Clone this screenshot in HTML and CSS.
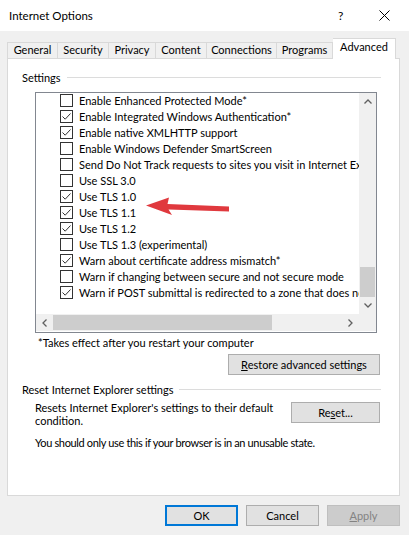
FILE: index.html
```html
<!DOCTYPE html>
<html lang="en">
<head>
    <meta charset="UTF-8">
    <meta name="viewport" content="width=device-width, initial-scale=1.0">
    <link rel="stylesheet" href="styles.css">
</head>
<body>
    <div class="window">
        <div class="titlebar">
            <span class="title">Internet Options</span>
            <span class="help">?</span>
            <svg class="close" width="11" height="11" viewBox="0 0 11 11"><path d="M0.5 0.5 L10.5 10.5 M10.5 0.5 L0.5 10.5" stroke="#000" stroke-width="1"/></svg>
        </div>

        <div class="tabs">
            <div class="tab t-general">General</div>
            <div class="tab t-security">Security</div>
            <div class="tab t-privacy">Privacy</div>
            <div class="tab t-content">Content</div>
            <div class="tab t-connections">Connections</div>
            <div class="tab t-programs">Programs</div>
            <div class="tab t-advanced active">Advanced</div>
        </div>

        <div class="panel">
            <div class="group-title"><span>Settings</span><div class="rule"></div></div>

            <div class="listbox">
                <div class="list-main">
                    <div class="items">
                        <div class="row"><span class="check"></span><span>Enable Enhanced Protected Mode*</span></div>
                        <div class="row"><span class="check on"></span><span>Enable Integrated Windows Authentication*</span></div>
                        <div class="row"><span class="check on"></span><span>Enable native XMLHTTP support</span></div>
                        <div class="row"><span class="check"></span><span>Enable Windows Defender SmartScreen</span></div>
                        <div class="row"><span class="check"></span><span>Send Do Not Track requests to sites you visit in Internet Explorer</span></div>
                        <div class="row"><span class="check"></span><span>Use SSL 3.0</span></div>
                        <div class="row"><span class="check on"></span><span>Use TLS 1.0</span></div>
                        <div class="row"><span class="check on"></span><span>Use TLS 1.1</span></div>
                        <div class="row"><span class="check on"></span><span>Use TLS 1.2</span></div>
                        <div class="row"><span class="check"></span><span>Use TLS 1.3 (experimental)</span></div>
                        <div class="row"><span class="check on"></span><span>Warn about certificate address mismatch*</span></div>
                        <div class="row"><span class="check"></span><span>Warn if changing between secure and not secure mode</span></div>
                        <div class="row"><span class="check on"></span><span>Warn if POST submittal is redirected to a zone that does not permit posts</span></div>
                    </div>
                    <div class="vscroll">
                        <div class="sb-btn">
                            <svg width="8" height="5" viewBox="0 0 8 5"><path d="M0.5 4.5 L4 1 L7.5 4.5" fill="none" stroke="#606060" stroke-width="1.3"/></svg>
                        </div>
                        <div class="vtrack"><div class="vthumb"></div></div>
                        <div class="sb-btn">
                            <svg width="8" height="5" viewBox="0 0 8 5"><path d="M0.5 0.5 L4 4 L7.5 0.5" fill="none" stroke="#606060" stroke-width="1.3"/></svg>
                        </div>
                    </div>
                </div>
                <div class="hscroll">
                    <div class="sb-btn">
                        <svg width="5" height="8" viewBox="0 0 5 8"><path d="M4.5 0.5 L1 4 L4.5 7.5" fill="none" stroke="#606060" stroke-width="1.3"/></svg>
                    </div>
                    <div class="htrack"><div class="hthumb"></div></div>
                    <div class="sb-btn">
                        <svg width="5" height="8" viewBox="0 0 5 8"><path d="M0.5 0.5 L4 4 L0.5 7.5" fill="none" stroke="#606060" stroke-width="1.3"/></svg>
                    </div>
                    <div class="corner"></div>
                </div>
            </div>

            <div class="note">*Takes effect after you restart your computer</div>
            <div class="restore-row">
                <button class="btn restore"><u>R</u>estore advanced settings</button>
            </div>

            <div class="group-title reset-title"><span>Reset Internet Explorer settings</span><div class="rule"></div></div>
            <div class="reset-row">
                <p class="reset-text">Resets Internet Explorer's settings to their default condition.</p>
                <button class="btn reset">Re<u>s</u>et...</button>
            </div>
            <p class="warn">You should only use this if your browser is in an unusable state.</p>
        </div>

        <div class="footer">
            <button class="btn default">OK</button>
            <button class="btn">Cancel</button>
            <button class="btn disabled"><u>A</u>pply</button>
        </div>

        <!-- red arrow pointing at TLS 1.0 -->
        <svg class="arrow" width="409" height="535" viewBox="0 0 409 535">
            <polygon points="146,205.5 169,197.5 167.5,204 229,206.5 229,211.5 168.5,209.5 172,215" fill="#e0393e"/>
        </svg>
    </div>
</body>
</html>
```

FILE: styles.css
```css
/* Global */
* {
    margin: 0;
    padding: 0;
    box-sizing: border-box;
}
body {
    font-family: "Lato", "Liberation Sans", sans-serif;
    font-size: 11px;
    color: #000;
    background-color: #f0f0f0;
}
.window {
    position: relative;
    width: 409px;
    height: 535px;
    background-color: #f0f0f0;
    overflow: hidden;
}

/* Title bar */
.titlebar {
    height: 31px;
    background-color: #fff;
    display: flex;
    align-items: center;
    padding-left: 9px;
}
.title {
    flex-grow: 1;
    font-size: 11.5px;
}
.help {
    width: 12px;
    margin-right: 29px;
    font-size: 12px;
}
.close {
    margin-right: 19px;
}

/* Tabs */
.tabs {
    display: flex;
    align-items: flex-end;
    padding: 7px 0 0 7px;
    position: relative;
    z-index: 1;
}
.tab {
    height: 16px;
    line-height: 14px;
    text-align: center;
    border: 1px solid #d9d9d9;
    border-bottom: none;
    border-left: none;
    background-color: #f0f0f0;
}
.tab:first-child {
    border-left: 1px solid #d9d9d9;
}
.t-general { width: 51px; }
.t-security { width: 51px; }
.t-privacy { width: 47px; }
.t-content { width: 51px; }
.t-connections { width: 70px; }
.t-programs { width: 56px; }
.tab.active {
    width: 63px;
    height: 21px;
    line-height: 15px;
    margin-bottom: -1px;
    background-color: #fff;
    border-left: none;
}

/* Panel */
.panel {
    height: 438px;
    margin: 0 9px 0 7px;
    background-color: #fff;
    border: 1px solid #d9d9d9;
    padding: 11px 18px 0 14px;
}
.group-title {
    display: flex;
    align-items: center;
    gap: 6px;
    height: 15px;
    line-height: 15px;
}
.rule {
    flex-grow: 1;
    height: 1px;
    background-color: #dcdcdc;
}

/* List box */
.listbox {
    margin: 7px 4px 0 13px;
    height: 241px;
    border: 1px solid #828790;
    display: flex;
    flex-direction: column;
}
.list-main {
    display: flex;
    height: 221px;
}
.items {
    flex-grow: 1;
    overflow: hidden;
    margin-top: -1px;
}
.row {
    display: flex;
    align-items: center;
    gap: 6px;
    height: 16px;
    padding-left: 24px;
    white-space: nowrap;
}
.check {
    flex-shrink: 0;
    width: 13px;
    height: 13px;
    border: 1px solid #333;
    background-color: #fff;
}
.check.on {
    background-image: url("data:image/svg+xml,%3Csvg xmlns='http://www.w3.org/2000/svg' width='11' height='11'%3E%3Cpath d='M1.5 5.5 L4.2 8.2 L9.5 2.5' fill='none' stroke='%23333' stroke-width='1'/%3E%3C/svg%3E");
    background-repeat: no-repeat;
}

/* Scroll bars */
.vscroll {
    width: 17px;
    flex-shrink: 0;
    display: flex;
    flex-direction: column;
    background-color: #f0f0f0;
}
.sb-btn {
    width: 17px;
    height: 17px;
    flex-shrink: 0;
    display: flex;
    align-items: center;
    justify-content: center;
}
.vtrack {
    flex-grow: 1;
    display: flex;
    flex-direction: column;
    justify-content: flex-end;
}
.vthumb {
    height: 30px;
    margin: 0 1px;
    background-color: #cdcdcd;
}
.hscroll {
    height: 17px;
    display: flex;
    background-color: #f0f0f0;
}
.htrack {
    flex-grow: 1;
    display: flex;
    align-items: center;
}
.hthumb {
    width: 219px;
    height: 15px;
    background-color: #cdcdcd;
}
.corner {
    width: 17px;
    flex-shrink: 0;
}

/* Lower part */
.note {
    margin: 2px 0 0 16px;
    line-height: 15px;
}
.restore-row {
    display: flex;
    justify-content: flex-end;
    margin-top: 4px;
    padding-right: 1px;
}
.btn {
    font-family: inherit;
    font-size: 11px;
    color: #000;
    height: 21px;
    background-color: #e1e1e1;
    border: 1px solid #adadad;
}
.restore {
    width: 152px;
}
.reset-title {
    margin-top: 7px;
}
.reset-row {
    display: flex;
    justify-content: space-between;
    align-items: flex-start;
    margin: 4px 1px 0 13px;
}
.reset-text {
    width: 245px;
    line-height: 13px;
}
.reset {
    width: 89px;
    margin-top: 1px;
}
.warn {
    margin: 8px 0 0 13px;
    line-height: 15px;
    letter-spacing: -0.35px;
}

/* Dialog buttons */
.footer {
    display: flex;
    justify-content: flex-end;
    gap: 8px;
    padding: 9px 9px 0 0;
}
.footer .btn {
    width: 73px;
}
.btn.default {
    border: 2px solid #0078d7;
}
.btn.disabled {
    background-color: #cccccc;
    border-color: #bfbfbf;
    color: #838383;
}

.arrow {
    position: absolute;
    left: 0;
    top: 0;
    pointer-events: none;
}
```
